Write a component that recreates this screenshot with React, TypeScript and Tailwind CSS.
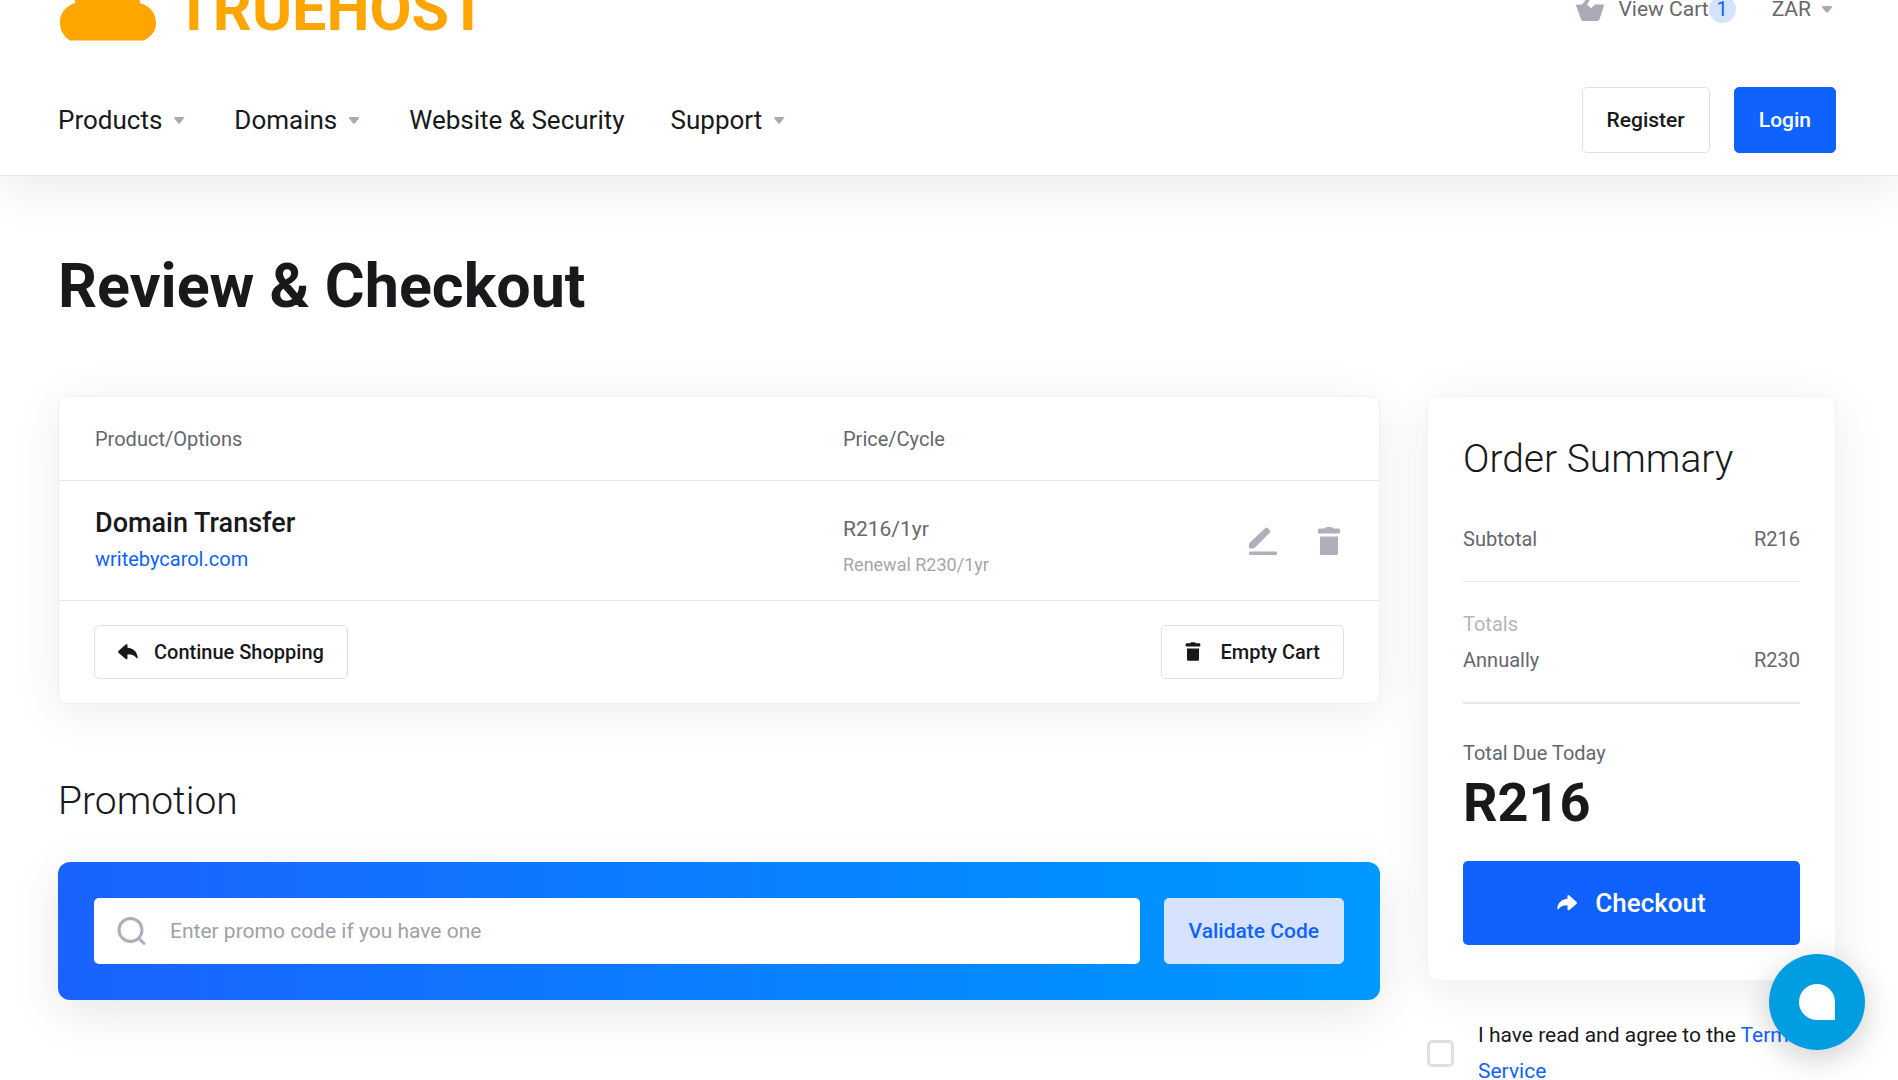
import React, { useState } from 'react';

const mainNav = [
  { label: 'Products', dropdown: true },
  { label: 'Domains', dropdown: true },
  { label: 'Website & Security', dropdown: false },
  { label: 'Support', dropdown: true },
];

const cartItems = [
  { id: 1, name: 'Domain Transfer', domain: 'writebycarol.com', price: 'R216/1yr', renewal: 'Renewal R230/1yr' },
];

function Caret() {
  return (
    <svg width="10" height="7" viewBox="0 0 10 7" className="shrink-0" aria-hidden="true">
      <path d="M1.2 0h7.6c1 0 1.5 1.1.8 1.8L6.2 6.1c-.7.8-1.7.8-2.4 0L.4 1.8C-.3 1.1.2 0 1.2 0z" fill="#a9aab2" />
    </svg>
  );
}

function TrashIcon({ className }: { className?: string }) {
  return (
    <svg viewBox="0 0 24 28" fill="currentColor" className={className} aria-hidden="true">
      <path d="M2.500 1.500h5Q8.500 0 10.500 0h3Q15.500 0 16.500 1.500h5q1.500 0 1.500 1.500v2.500q0 1-1 1H2q-1 0-1-1V3Q1 1.500 2.500 1.500zM3 9.500h18v17q0 1.500-1.500 1.500h-15Q3 28 3 26.500z" />
    </svg>
  );
}

function EditIcon() {
  return (
    <svg width="28" height="28" viewBox="0 0 28 28" fill="currentColor" aria-hidden="true">
      <path d="M16.700.8q.8-.8 1.600 0l2.900 2.900q.8.800 0 1.600L6 20.600q-.9.900-2 .9H1q-1 0-1-1v-3q0-1.100.8-1.900z" />
      <rect y="24.500" width="28" height="3.500" rx="1.200" />
    </svg>
  );
}

function ReplyIcon({ className }: { className?: string }) {
  return (
    <svg viewBox="0 0 20 16" fill="currentColor" className={className} aria-hidden="true">
      <path d="M.4 7.100 7.700.4Q9.200-.6 9.500 1v2.700C15.500 4 19.200 8 19.700 13.300c.1 1.200-.8 1.400-1.500.5-2.100-2.700-4.800-3.500-8.700-3.500v3.900q-.3 1.700-1.800.7L.4 8.700Q-.2 7.900.4 7.100z" />
    </svg>
  );
}

function Logo() {
  return (
    <a href="#" className="flex items-center text-[#ffa500]">
      <svg width="99" height="66" viewBox="0 0 99 66" fill="currentColor" aria-hidden="true">
        <path d="M12 64.500C5 60 2 54 2 46c0-9 6-16 15-19C17 12 32 1 50 1s31 11 32 26c10 3 16 10 16 20 0 8-4 13-12 17.500z" />
      </svg>
      <span className="ml-[18px] text-[61px] leading-[64px] font-bold">TRUEHOST</span>
    </a>
  );
}

export default function App() {
  const [promo, setPromo] = useState('');
  const [agreed, setAgreed] = useState(false);

  return (
    <div className="min-h-screen bg-white font-[Roboto,sans-serif] text-[20px] leading-9 text-[#66676d] antialiased">
      <header className="-mt-[39px] border-b border-[#e8e8ea] pl-[58px] pr-[62px] shadow-[0_10px_50px_rgba(0,0,0,0.09)]">
        <div className="flex h-24 items-center justify-between">
          <Logo />
          <div className="flex items-center text-[21px]">
            <a href="#" className="flex items-center">
              <svg width="28" height="24" viewBox="0 0 28 24" fill="#a9aab6" className="mr-[14px]" aria-hidden="true">
                <path d="M6 7.500 11.500.8q1-1.200 2.200-.2t.3 2.200L11 7.500l4 3.700 4-3.700h8q1.200 0 .9 1.200L23.600 22q-.6 2-2.600 2H7.500q-2 0-2.600-2L.1 8.700Q-.2 7.500 1 7.500z" />
              </svg>
              <span>View Cart</span>
              <span className="flex size-[27px] items-center justify-center rounded-full bg-[#d6e3ff] text-[20px] text-[#1062fe]">1</span>
            </a>
            <button type="button" className="ml-9 mr-1 flex items-center gap-[11px]">
              ZAR <Caret />
            </button>
          </div>
        </div>
        <div className="flex items-center justify-between pt-[30px] pb-[22px]">
          <nav className="flex items-center gap-[46px] text-[26px] text-[#18191b]">
            {mainNav.map((item) => (
              <a key={item.label} href="#" className="flex items-center gap-3">
                {item.label}
                {item.dropdown && <span className="mr-1"><Caret /></span>}
              </a>
            ))}
          </nav>
          <div className="flex gap-6 text-[21px] font-medium">
            <a href="#" className="flex h-[66px] items-center rounded-[5px] border border-[#dfe0e3] px-6 text-[#18191b]">Register</a>
            <a href="#" className="flex h-[66px] items-center rounded-[5px] border border-[#1062fe] bg-[#1062fe] px-6 text-white">Login</a>
          </div>
        </div>
      </header>

      <main className="pl-[58px] pr-[62px] pt-[74px]">
        <h1 className="text-[61px] leading-[72px] font-bold text-[#18191b]">Review &amp; Checkout</h1>

        <div className="mt-[74px] flex items-start gap-[47px]">
          <div className="min-w-0 flex-1">
            <section className="rounded-[10px] border border-[#f0f0f2] bg-white shadow-[0_8px_48px_rgba(0,0,0,0.08)]">
              <table className="w-full table-fixed text-left">
                <thead>
                  <tr className="h-[83px] border-b border-[#e8e8ea]">
                    <th className="pt-0.5 pl-9 font-normal">Product/Options</th>
                    <th className="w-[340px] pt-0.5 font-normal">Price/Cycle</th>
                    <th className="w-[196px]" aria-label="Actions"></th>
                  </tr>
                </thead>
                <tbody>
                  {cartItems.map((item) => (
                    <tr key={item.id} className="h-[120px] border-b border-[#e8e8ea]">
                      <td className="pt-0.5 pl-9">
                        <div className="text-[27px] font-medium text-[#18191b]">{item.name}</div>
                        <a href="#" className="block text-[#1062fe]">{item.domain}</a>
                      </td>
                      <td className="pt-3.5">
                        <div className="text-[21px]">{item.price}</div>
                        <div className="text-[18px] text-[#a5a6ab]">{item.renewal}</div>
                      </td>
                      <td className="pt-0.5 pr-[38px]">
                        <div className="flex justify-end gap-10 text-[#aeafbb]">
                          <button type="button" aria-label="Edit"><EditIcon /></button>
                          <button type="button" aria-label="Remove"><TrashIcon className="h-7 w-6" /></button>
                        </div>
                      </td>
                    </tr>
                  ))}
                </tbody>
              </table>
              <div className="flex justify-between px-[35px] py-6 font-medium text-[#18191b]">
                <a href="#" className="flex h-[54px] items-center gap-4 rounded-[5px] border border-[#dfe0e3] px-[23px]">
                  <ReplyIcon className="h-4 w-5" /> Continue Shopping
                </a>
                <button type="button" className="flex h-[54px] items-center gap-5 rounded-[5px] border border-[#dfe0e3] px-[23px]">
                  <TrashIcon className="h-[19px] w-4" /> Empty Cart
                </button>
              </div>
            </section>

            <h2 className="mt-[73px] text-[39px] leading-[48px] font-light text-[#18191b]">Promotion</h2>
            <form
              onSubmit={(e) => e.preventDefault()}
              className="mt-[37px] flex gap-6 rounded-[12px] bg-linear-to-r from-[#1a62ff] to-[#0099ff] p-9 shadow-[0_12px_48px_rgba(0,0,0,0.1)]"
            >
              <label className="flex h-[66px] flex-1 items-center gap-6 rounded-[5px] bg-white pl-[23px] pr-6 text-[21px]">
                <svg width="29" height="28" viewBox="0 0 29 28" fill="none" stroke="#aeafbb" strokeWidth="3" strokeLinecap="round" aria-hidden="true">
                  <circle cx="13.500" cy="13" r="11.500" />
                  <path d="m22 21.500 5 5" />
                </svg>
                <input
                  value={promo}
                  onChange={(e) => setPromo(e.target.value)}
                  placeholder="Enter promo code if you have one"
                  aria-label="Promo code"
                  className="min-w-0 flex-1 outline-none placeholder:text-[#a0a1a6]"
                />
              </label>
              <button type="submit" className="h-[66px] rounded-[5px] border border-[#d6e3ff] bg-[#d6e3ff] px-6 text-[21px] font-medium text-[#1062fe]">Validate Code</button>
            </form>
          </div>

          <aside className="w-[409px] shrink-0">
            <section className="rounded-[10px] border border-[#f3f3f5] bg-white p-[35px] shadow-[0_8px_48px_rgba(0,0,0,0.08)]">
              <h2 className="text-[39px] leading-[54px] font-light text-[#18191b]">Order Summary</h2>
              <div className="mt-[35px] flex justify-between border-b border-[#e8e8ea] pb-6">
                <span>Subtotal</span>
                <span>R216</span>
              </div>
              <div className="mt-6 text-[#b4b5b9]">Totals</div>
              <div className="flex justify-between border-b-2 border-[#e8e8ea] pb-6">
                <span>Annually</span>
                <span>R230</span>
              </div>
              <div className="mt-[31px]">Total Due Today</div>
              <div className="text-[54px] leading-[64px] font-bold text-[#18191b]">R216</div>
              <button type="button" className="mt-[26px] flex h-[84px] w-full items-center justify-center gap-[18px] rounded-[5px] bg-[#1062fe] text-[26px] font-medium text-white">
                <ReplyIcon className="h-4 w-5 -scale-x-100" /> Checkout
              </button>
            </section>

            <label className="mt-9 flex items-center gap-6 text-[21px] text-[#18191b]">
              <input
                type="checkbox"
                checked={agreed}
                onChange={(e) => setAgreed(e.target.checked)}
                className="size-[27px] shrink-0 appearance-none rounded-[5px] border-3 border-[#dfe0e3] bg-white checked:bg-[#1062fe]"
              />
              <span>I have read and agree to the <a href="#" className="text-[#1062fe]">Terms of Service</a></span>
            </label>
          </aside>
        </div>
      </main>

      <button
        type="button"
        aria-label="Open chat"
        className="fixed right-[33px] bottom-[30px] flex size-24 items-center justify-center rounded-full bg-[#009de0] shadow-[0_8px_32px_rgba(0,0,0,0.2)]"
      >
        <svg width="36" height="36" viewBox="0 0 36 36" fill="#fff" aria-hidden="true">
          <path d="M18 0a18 18 0 0 1 18 18v17q0 1-1 1H18a18 18 0 0 1 0-36z" />
        </svg>
      </button>
    </div>
  );
}
